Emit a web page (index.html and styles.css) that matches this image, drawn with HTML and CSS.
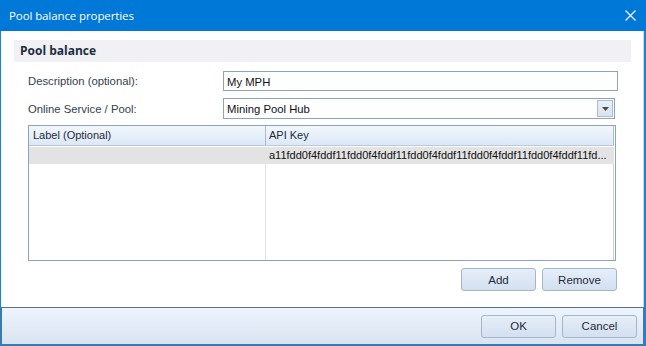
FILE: index.html
```html
<!DOCTYPE html>
<html lang="en">
<head>
  <meta charset="UTF-8" />
  <title>Pool balance properties</title>
  <link rel="stylesheet" href="styles.css">
</head>
<body>
  <div class="window">
    <div class="titlebar">
      <span class="title">Pool balance properties</span>
      <svg class="close" width="11" height="11" viewBox="0 0 11 11">
        <path d="M0.5 0.5 L10.5 10.5 M10.5 0.5 L0.5 10.5" stroke="#fff" stroke-width="1.1" fill="none" />
      </svg>
    </div>

    <div class="content">
      <div class="section-head">Pool balance</div>

      <div class="form">
        <label class="form-label">Description (optional):</label>
        <input class="text-input" type="text" value="My MPH" />

        <label class="form-label">Online Service / Pool:</label>
        <div class="combo">
          <span class="combo-value">Mining Pool Hub</span>
          <span class="combo-btn">
            <svg width="7" height="4" viewBox="0 0 7 4"><path d="M0 0 H7 L3.5 4 Z" fill="#4a4a4a" /></svg>
          </span>
        </div>
      </div>

      <div class="grid">
        <div class="grid-row grid-header">
          <div class="cell col-label">Label (Optional)</div>
          <div class="cell col-key">API Key</div>
        </div>
        <div class="grid-row grid-selected">
          <div class="cell col-label"></div>
          <div class="cell col-key">a11fdd0f4fddf11fdd0f4fddf11fdd0f4fddf11fdd0f4fddf11fdd0f4fddf11fd...</div>
        </div>
        <div class="grid-row grid-empty">
          <div class="cell col-label"></div>
          <div class="cell col-key"></div>
        </div>
      </div>

      <div class="grid-actions">
        <button class="btn">Add</button>
        <button class="btn">Remove</button>
      </div>
    </div>

    <div class="footer">
      <button class="btn">OK</button>
      <button class="btn">Cancel</button>
    </div>
  </div>
</body>
</html>
```

FILE: styles.css
```css
html, body {
  margin: 0;
  padding: 0;
  width: 646px;
  height: 346px;
  overflow: hidden;
  background: #fff;
}

.window {
  box-sizing: border-box;
  width: 646px;
  height: 346px;
  display: flex;
  flex-direction: column;
  border: 1px solid #1883d7;
  border-top: none;
  border-right-width: 2px;
  background: #fff;
  font-family: "Liberation Sans", Arial, sans-serif;
  font-size: 11px;
  color: #1e2b3a;
}

.titlebar {
  height: 31px;
  flex: none;
  background: #0078d7;
  display: flex;
  align-items: center;
  justify-content: space-between;
  padding: 0 10px 0 9px;
  margin: 0 -2px 0 -1px;
}

.title {
  font-family: "Open Sans", "Noto Sans", sans-serif;
  font-size: 11.5px;
  color: #fff;
  letter-spacing: -0.1px;
}

.close {
  display: block;
}

.content {
  flex: 1;
  padding: 9px 12px 0 13px;
  border-right: 1px solid #d6d6d6;
}

.section-head {
  height: 22px;
  line-height: 22px;
  background: #f0f0f5;
  padding-left: 6px;
  font-family: "Open Sans", "Noto Sans", sans-serif;
  font-weight: bold;
  font-size: 12px;
  color: #1e2d3c;
}

/* Поля формы */
.form {
  display: grid;
  grid-template-columns: 195px 1fr;
  row-gap: 7px;
  margin: 9px 14px 0 14px;
  align-items: center;
}

.form-label {
  font-size: 11.3px;
  color: #343e4c;
}

.text-input {
  box-sizing: border-box;
  height: 20px;
  width: 395px;
  margin: 0;
  padding: 1px 3px 0;
  border: 1px solid #8aa3bf;
  font-family: "Liberation Sans", Arial, sans-serif;
  font-size: 11.3px;
  color: #111;
  outline: none;
}

.combo {
  box-sizing: border-box;
  height: 21px;
  width: 392px;
  border: 1px solid #8aa3bf;
  display: flex;
  align-items: center;
  justify-content: space-between;
  padding: 0 1px 0 3px;
  font-size: 11.3px;
  color: #111;
}

.combo-btn {
  box-sizing: border-box;
  width: 16px;
  height: 17px;
  background: linear-gradient(#e9eff7, #d8e3f0);
  border: 1px solid #a9bcd3;
  display: flex;
  align-items: center;
  justify-content: center;
}

/* Таблица ключей */
.grid {
  box-sizing: border-box;
  height: 136px;
  margin: 6px 15px 0 14px;
  border: 1px solid #8aa3bf;
  display: flex;
  flex-direction: column;
  padding-right: 1px;
}

.grid-row {
  display: flex;
}

.cell {
  box-sizing: border-box;
  padding: 0 4px;
  white-space: nowrap;
  overflow: hidden;
}

.col-label {
  width: 237px;
  border-right: 1px solid #e3e3e3;
}

.col-key {
  flex: 1;
  border-right: 1px solid #d0d0d0;
  padding-left: 3px;
  padding-right: 2px;
}

.grid-header {
  height: 19px;
  line-height: 18px;
  background: linear-gradient(#f3f7fd, #dce8f7);
  border-bottom: 1px solid #b6c8dc;
  color: #1e2b3a;
}

.grid-header .col-label {
  border-right-color: #a7bcd3;
}

.grid-header .col-key {
  border-right-color: #a7bcd3;
}

.grid-selected {
  height: 17px;
  line-height: 17px;
  margin-top: 1px;
  background: #e3e3e3;
  color: #111;
  font-size: 11px;
}

.grid-selected .col-label,
.grid-selected .col-key {
  border-right-color: #e3e3e3;
}

.grid-empty {
  flex: 1;
}

.grid-actions {
  display: flex;
  justify-content: flex-end;
  gap: 6px;
  margin: 7px 14px 0 0;
}

.btn {
  box-sizing: border-box;
  width: 75px;
  height: 23px;
  margin: 0;
  padding: 0;
  border: 1px solid #a3b6cc;
  border-radius: 3px;
  background: linear-gradient(#e6eef9, #d3e0f0);
  font-family: "Liberation Sans", Arial, sans-serif;
  font-size: 11.5px;
  color: #1e2b3a;
}

.footer {
  flex: none;
  box-sizing: border-box;
  height: 38px;
  border: 1px solid #5b7089;
  background: linear-gradient(#edf4fc, #d9e4f1);
  display: flex;
  justify-content: flex-end;
  align-items: center;
  gap: 6px;
  padding: 0 6px 0 0;
}
```
